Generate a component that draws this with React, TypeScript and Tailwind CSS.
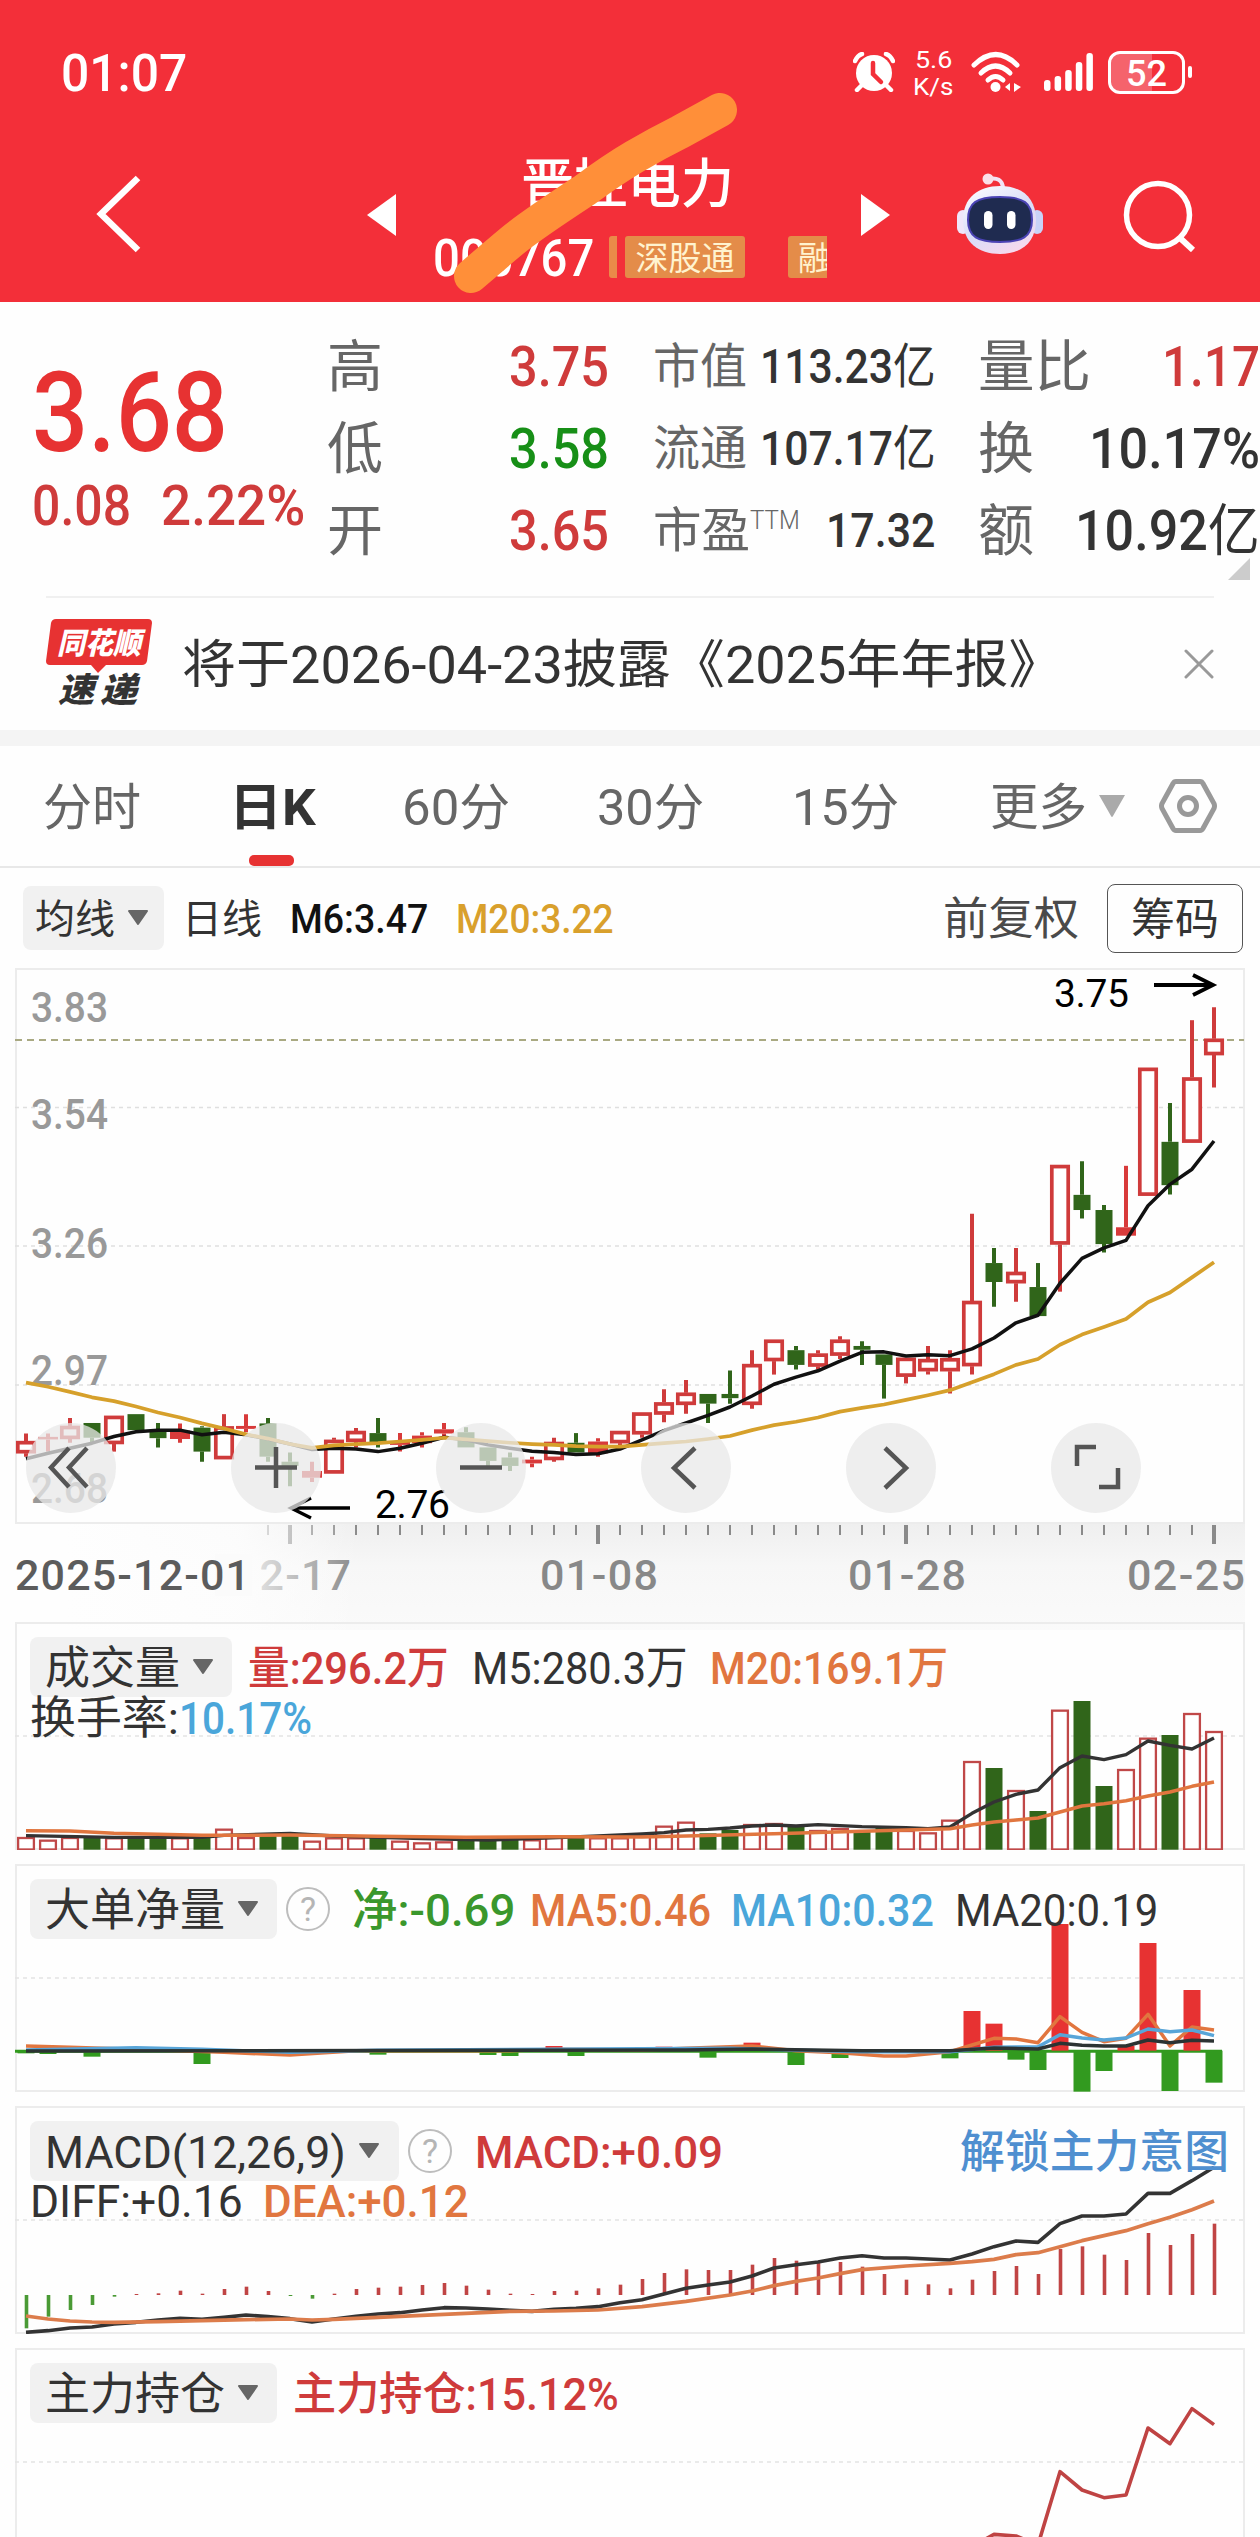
import React, {useLayoutEffect, useRef, useState} from "react";
import clsx from "clsx";

const RED = "#cf3b3b";
const GREEN = "#30651a";
const UP = "#e73232";
const DOWN = "#329a1f";
const FONT = "Roboto, 'Noto Sans CJK SC', sans-serif";

interface FitProps {
    className: string;
    children: React.ReactNode;
}

// one line of text, squeezed or stretched to the width of its box
const Fit: React.FC<FitProps> = ({className, children}) => {
    const outer = useRef<HTMLSpanElement>(null);
    const inner = useRef<HTMLSpanElement>(null);
    const [k, setK] = useState(1);
    useLayoutEffect(() => {
        if (outer.current && inner.current) {
            setK(outer.current.clientWidth / inner.current.offsetWidth);
        }
    }, []);
    return (
        <span ref={outer} className={clsx("block shrink-0 whitespace-nowrap pt-[3px] leading-none", className)}>
            <span ref={inner} className="inline-block origin-left" style={{transform: `scaleX(${k})`}}>{children}</span>
        </span>
    );
};

const Caret: React.FC<{ className?: string }> = ({className}) => (
    <svg className={clsx("shrink-0", className)} width="22" height="16" viewBox="0 0 22 16">
        <path d="M2 1h18L11 14z" fill="#666" stroke="#666" strokeWidth="2" strokeLinejoin="round"/>
    </svg>
);

const Help: React.FC = () => (
    <span className="ml-[9px] flex h-[44px] w-[44px] shrink-0 items-center justify-center rounded-full border-[2.5px] border-[#bdbdbd] text-[34px] leading-none text-[#b5b5b5]">?</span>
);

const StatusBar: React.FC = () => (
    <div className="flex h-[144px] items-center pl-[61px]">
        <Fit className="w-[126px] text-[51px] font-medium">01:07</Fit>
        <svg className="ml-[666px] shrink-0" width="42" height="40" viewBox="0 0 42 40">
            <circle cx="21" cy="21" r="18" fill="#fff"/>
            <path d="M2 9q3-6 7-7M40 9q-3-6-7-7M8 34l-4 4M34 34l4 4" stroke="#fff" strokeWidth="4.5" strokeLinecap="round" fill="none"/>
            <path d="M20 11v11l8 8" stroke="#f32f39" strokeWidth="4.5" strokeLinecap="round" fill="none"/>
        </svg>
        <div className="ml-[18px] flex w-[40px] flex-col items-center">
            <Fit className="w-[37px] text-[24px]">5.6</Fit>
            <Fit className="w-[40px] text-[24px]">K/s</Fit>
        </div>
        <svg className="ml-[18px] shrink-0" width="50" height="42" viewBox="0 0 50 42">
            <g fill="none" stroke="#fff" strokeWidth="5" strokeLinecap="round">
                <path d="M3 14q22-21 43 0"/>
                <path d="M10 22q14.500-14 29 0"/>
                <path d="M17 29q7.500-7 15 0"/>
            </g>
            <circle cx="24.500" cy="36" r="5" fill="#fff"/>
            <path d="M34 36l5-4v8zM50 36l-7-4v9z" fill="#fff"/>
        </svg>
        <svg className="ml-[23px] shrink-0" width="50" height="40" viewBox="0 0 50 40">
            {[28, 24, 18, 10, 1].map((y, i) => (
                <rect key={y} x={i * 10.6} y={y} width="6.500" height={39 - y} rx="3" fill="#fff"/>
            ))}
        </svg>
        <div className="ml-[14px] flex h-[43px] w-[77px] shrink-0 items-center justify-center rounded-[12px] border-[3px] border-white bg-[linear-gradient(90deg,#f5636c_58%,transparent_58%)]">
            <Fit className="w-[41px] text-[37px] font-medium">52</Fit>
        </div>
        <div className="ml-[3px] h-[12px] w-[4px] rounded-full bg-white"/>
    </div>
);

const Robot: React.FC = () => (
    <svg className="ml-[65px] shrink-0" width="88" height="84" viewBox="0 0 88 84">
        <defs>
            <linearGradient id="shell" x1="0" y1="0" x2="0.600" y2="1">
                <stop offset="0" stopColor="#fff"/>
                <stop offset="0.600" stopColor="#d9dcf8"/>
                <stop offset="1" stopColor="#f4d9ee"/>
            </linearGradient>
        </defs>
        <path d="M32 7q14-3 15 9" stroke="#f3e3f5" strokeWidth="4" fill="none"/>
        <circle cx="32" cy="7" r="5.500" fill="#fbdfe8"/>
        <rect x="1" y="38" width="12" height="24" rx="6" fill="#efe6fa"/>
        <rect x="75" y="38" width="12" height="24" rx="6" fill="#c9d2f7"/>
        <path d="M44 14c22 0 36 12 36 34S66 82 44 82 7 70 7 48s15-34 37-34z" fill="url(#shell)"/>
        <path d="M44 25c24 0 32 6 32 23S66 70 44 70 12 65 12 48s8-23 32-23z" fill="#1f2b50" stroke="#4a43b4" strokeWidth="2"/>
        <rect x="28" y="39" width="8.500" height="18" rx="4.200" fill="#fff"/>
        <rect x="51" y="39" width="8.500" height="18" rx="4.200" fill="#fff"/>
    </svg>
);

const Header: React.FC = () => (
    <header className="relative h-[302px] bg-[#f32f39] text-white">
        <StatusBar/>
        <div className="flex h-[140px] items-center pl-[95px]">
            <svg className="shrink-0" width="48" height="80" viewBox="0 0 48 80">
                <path d="M43 4L6 40l37 36" stroke="#fff" strokeWidth="6.500" fill="none"/>
            </svg>
            <svg className="ml-[224px] shrink-0" width="30" height="44" viewBox="0 0 30 44">
                <path d="M0 23L29 2v42z" fill="#fff"/>
            </svg>
            <div className="ml-[36px] flex h-full w-[394px] flex-col pt-[12px]">
                <Fit className="ml-[88px] h-[54px] w-[213px] text-[53px] font-medium">晋控电力</Fit>
                <div className="mt-[20px] flex h-[58px] items-center overflow-hidden">
                    <Fit className="w-[161px] text-[52px] font-medium">000767</Fit>
                    <div className="ml-[15px] h-[42px] w-[8px] shrink-0 rounded-l-[3px] bg-[#ea8a49]"/>
                    <div className="ml-[8px] flex h-[42px] w-[120px] shrink-0 items-center justify-center rounded-[3px] bg-[#e48c49] text-[#fff3cf]">
                        <Fit className="w-[99px] text-[33px]">深股通</Fit>
                    </div>
                    <div className="ml-[43px] flex h-[42px] w-[120px] shrink-0 items-center rounded-[3px] bg-[#e48c49] pl-[10px] text-[#fff3cf]">
                        <Fit className="w-[33px] text-[33px]">融</Fit>
                    </div>
                </div>
            </div>
            <svg className="ml-[34px] shrink-0" width="30" height="44" viewBox="0 0 30 44">
                <path d="M29 23L0 2v42z" fill="#fff"/>
            </svg>
            <Robot/>
            <svg className="ml-[78px] shrink-0" width="76" height="76" viewBox="0 0 76 76">
                <circle cx="36" cy="39" r="31.500" stroke="#fff" strokeWidth="5.500" fill="none"/>
                <path d="M58 62l13 12" stroke="#fff" strokeWidth="6"/>
            </svg>
        </div>
        {/* marker stroke over the stock name */}
        <svg className="absolute left-[440px] top-[80px]" width="310" height="220" viewBox="440 80 310 220">
            <path d="M471 276Q494 256 512 241T585 190Q612 170 634 157T680 132L720 110" stroke="#ff8f39" strokeWidth="34" strokeLinecap="round" strokeLinejoin="round" fill="none"/>
        </svg>
    </header>
);

const Quote: React.FC = () => (
    <section className="relative flex h-[294px] text-[56px] text-[#333]">
        <div className="w-[327px] pl-[32px] pt-[52px]">
            <Fit className="w-[196px] text-[112px] font-medium text-[#e73232]">3.68</Fit>
            <div className="mt-[6px] flex text-[#cf3b3b] font-medium">
                <Fit className="w-[99px]">0.08</Fit>
                <Fit className="ml-[30px] w-[144px]">2.22%</Fit>
            </div>
        </div>
        <div className="w-[282px] pt-[22px] text-[#666]">
            <div className="flex h-[82px] items-center justify-between">
                <Fit className="w-[56px]">高</Fit>
                <Fit className="w-[100px] font-medium text-[#cf3b3b]">3.75</Fit>
            </div>
            <div className="flex h-[82px] items-center justify-between">
                <Fit className="w-[56px]">低</Fit>
                <Fit className="w-[100px] font-medium text-[#178f17]">3.58</Fit>
            </div>
            <div className="flex h-[82px] items-center justify-between">
                <Fit className="w-[56px]">开</Fit>
                <Fit className="w-[100px] font-medium text-[#cf3b3b]">3.65</Fit>
            </div>
        </div>
        <div className="ml-[44px] w-[283px] pt-[22px] text-[48px]">
            <div className="flex h-[82px] items-center justify-between">
                <Fit className="w-[94px] text-[#666]">市值</Fit>
                <Fit className="w-[176px] font-medium">113.23<span className="font-normal">亿</span></Fit>
            </div>
            <div className="flex h-[82px] items-center justify-between">
                <Fit className="w-[94px] text-[#666]">流通</Fit>
                <Fit className="w-[176px] font-medium">107.17<span className="font-normal">亿</span></Fit>
            </div>
            <div className="flex h-[82px] items-center">
                <Fit className="w-[97px] text-[#666]">市盈</Fit>
                <Fit className="mb-[20px] w-[50px] text-[25px] font-light text-[#666]">TTM</Fit>
                <Fit className="ml-[26px] w-[109px] font-medium">17.32</Fit>
            </div>
        </div>
        <div className="ml-[42px] w-[282px] pt-[22px]">
            <div className="flex h-[82px] items-center justify-between">
                <Fit className="w-[113px] text-[#666]">量比</Fit>
                <Fit className="w-[98px] font-medium text-[#cf3b3b]">1.17</Fit>
            </div>
            <div className="flex h-[82px] items-center justify-between">
                <Fit className="w-[56px] text-[#666]">换</Fit>
                <Fit className="w-[171px] font-medium">10.17%</Fit>
            </div>
            <div className="flex h-[82px] items-center justify-between">
                <Fit className="w-[56px] text-[#666]">额</Fit>
                <Fit className="w-[185px] font-medium">10.92<span className="font-normal">亿</span></Fit>
            </div>
        </div>
        <svg className="absolute left-[1228px] top-[256px]" width="22" height="22" viewBox="0 0 22 22">
            <path d="M22 0v22H0z" fill="#ccc"/>
        </svg>
    </section>
);

const News: React.FC = () => (
    <section className="mx-[46px] flex h-[134px] items-center border-t-2 border-[#f0f0f0]">
        <svg className="-mt-[3px] shrink-0 overflow-visible" width="108" height="94" viewBox="0 0 108 94" fontFamily={FONT} fontStyle="italic">
            <path d="M10 3h92q4 0 4 4l-5 38q-1 4-5 4H60l-8 8-7-8H4q-4 0-4-4L5 7q1-4 5-4z" fill="#e73232"/>
            <text x="11" y="38" fontSize="30" fontWeight="900" fill="#fff" textLength="84" lengthAdjust="spacingAndGlyphs">同花顺</text>
            <text x="12" y="86" fontSize="34" fontWeight="900" fill="#333" textLength="36" lengthAdjust="spacingAndGlyphs">速</text>
            <text x="54" y="86" fontSize="34" fontWeight="900" fill="#333" textLength="37" lengthAdjust="spacingAndGlyphs">递</text>
        </svg>
        <Fit className="ml-[28px] w-[880px] text-[52px] text-[#333]">将于2026-04-23披露《2025年年报》</Fit>
        <svg className="ml-[122px] shrink-0" width="30" height="30" viewBox="0 0 30 30">
            <path d="M2 2l26 26M28 2L2 28" stroke="#999" strokeWidth="3" strokeLinecap="round"/>
        </svg>
    </section>
);

const Tabs: React.FC = () => (
    <nav className="relative flex h-[122px] items-center border-b-2 border-[#e8e8e8] pl-[43px] text-[50px] text-[#666]">
        <Fit className="w-[98px]">分时</Fit>
        <Fit className="ml-[88px] w-[87px] font-bold text-[#333]">日K</Fit>
        <Fit className="ml-[86px] w-[108px]">60分</Fit>
        <Fit className="ml-[87px] w-[107px]">30分</Fit>
        <Fit className="ml-[88px] w-[107px]">15分</Fit>
        <Fit className="ml-[91px] w-[97px]">更多</Fit>
        <svg className="ml-[11px] shrink-0" width="28" height="24" viewBox="0 0 28 24">
            <path d="M1 1h26L15 22q-1 2-2 0z" fill="#aaa"/>
        </svg>
        <svg className="ml-[33px] shrink-0" width="58" height="56" viewBox="0 0 58 56">
            <path d="M17 3.500h24q2 0 3 2l11 20q1 2.500 0 5l-11 20q-1 2-3 2H17q-2 0-3-2L3 30.500q-1-2.500 0-5l11-20q1-2 3-2z" stroke="#999" strokeWidth="5" fill="none"/>
            <circle cx="29" cy="28" r="8.500" stroke="#999" strokeWidth="5" fill="none"/>
        </svg>
        <div className="absolute bottom-0 left-[249px] h-[11px] w-[45px] rounded-[5px] bg-[#e73232]"/>
    </nav>
);

const AverageRow: React.FC = () => (
    <div className="flex h-[100px] items-center pl-[23px] text-[41px] text-[#333]">
        <div className="flex h-[64px] w-[141px] items-center rounded-[8px] bg-[#f1f1f1] pl-[12px]">
            <Fit className="w-[80px] text-[40px]">均线</Fit>
            <Caret className="ml-[12px]"/>
        </div>
        <Fit className="ml-[18px] w-[80px] text-[40px]">日线</Fit>
        <Fit className="ml-[28px] w-[138px] font-medium text-[#111]">M6:3.47</Fit>
        <Fit className="ml-[28px] w-[158px] font-medium text-[#d9a02c]">M20:3.22</Fit>
        <Fit className="ml-[329px] w-[136px] text-[45px] text-[#4a4a4a]">前复权</Fit>
        <div className="ml-[28px] flex h-[69px] w-[136px] shrink-0 items-center justify-center rounded-[8px] border border-[#555]">
            <Fit className="w-[88px] text-[44px]">筹码</Fit>
        </div>
    </div>
);

const cx = (i: number) => 11 + i * 22;

type Point = [number, number];

const line = (points: Point[], y: (v: number) => number) => points.map(([i, v]) => `${cx(i)},${y(v)}`).join(" ");

const series = (values: number[]): Point[] => values.map((v, i) => [i, v]);

// kind, high, body top, body bottom, low ("r" is a flat red body)
const candles: [string, number, number, number, number][] = [
    ["R", 1125, 1143, 1172, 1180], ["r", 1125, 1133, 1139, 1168], ["R", 1088, 1107, 1138, 1147], ["G", 1100, 1100, 1135, 1147],
    ["R", 1083, 1083, 1150, 1168], ["G", 1079, 1079, 1117, 1117], ["G", 1100, 1118, 1136, 1158], ["r", 1101, 1118, 1138, 1147],
    ["G", 1108, 1111, 1168, 1192], ["R", 1079, 1108, 1186, 1186], ["r", 1079, 1107, 1114, 1122], ["G", 1088, 1101, 1180, 1192],
    ["G", 1170, 1192, 1202, 1250], ["r", 1192, 1214, 1230, 1240], ["R", 1135, 1140, 1220, 1220], ["R", 1112, 1119, 1145, 1158],
    ["G", 1088, 1124, 1147, 1158], ["r", 1124, 1144, 1152, 1168], ["r", 1122, 1130, 1148, 1158], ["r", 1100, 1115, 1125, 1136],
    ["G", 1110, 1122, 1158, 1158], ["G", 1158, 1158, 1190, 1202], ["G", 1170, 1182, 1202, 1214], ["r", 1180, 1187, 1196, 1205],
    ["R", 1135, 1145, 1188, 1192], ["G", 1124, 1147, 1170, 1170], ["r", 1136, 1144, 1172, 1180], ["R", 1119, 1119, 1148, 1158],
    ["R", 1075, 1075, 1127, 1135], ["R", 1020, 1051, 1080, 1098], ["R", 998, 1028, 1057, 1078], ["G", 1031, 1031, 1054, 1100],
    ["G", 975, 1031, 1041, 1054], ["R", 927, 960, 1057, 1066], ["R", 902, 902, 953, 985], ["G", 917, 927, 962, 973],
    ["R", 927, 935, 966, 973], ["R", 894, 902, 940, 948], ["G", 906, 917, 926, 962], ["G", 937, 937, 962, 1042],
    ["R", 945, 945, 990, 1006], ["R", 917, 948, 977, 985], ["R", 927, 946, 977, 1030], ["R", 603, 810, 965, 985],
    ["G", 684, 720, 765, 824], ["R", 684, 741, 768, 812], ["G", 720, 777, 846, 846], ["R", 487, 487, 676, 788],
    ["G", 478, 558, 594, 614], ["G", 582, 594, 675, 695], ["r", 489, 635, 655, 655], ["R", 256, 256, 560, 560],
    ["G", 340, 432, 535, 557], ["R", 143, 279, 434, 434], ["R", 112, 187, 226, 303],
];

const ma6 = [1185, 1172, 1160, 1148, 1132, 1121, 1117, 1117, 1128, 1122, 1128, 1138, 1150, 1163, 1160, 1162, 1168, 1160, 1148, 1134,
    1140, 1152, 1160, 1167, 1170, 1175, 1173, 1162, 1140, 1118, 1100, 1082, 1062, 1036, 1008, 991, 976, 953, 932, 931,
    941, 938, 940, 924, 898, 862, 844, 768, 709, 684, 666, 584, 533, 497, 430];

const ma20 = [1004, 1014, 1026, 1039, 1048, 1061, 1075, 1087, 1101, 1113, 1127, 1137, 1150, 1159, 1153, 1150, 1148, 1144, 1140, 1135,
    1139, 1143, 1147, 1150, 1152, 1155, 1156, 1156, 1152, 1148, 1144, 1138, 1131, 1117, 1105, 1097, 1087, 1073, 1064, 1056,
    1045, 1034, 1022, 1003, 984, 962, 948, 914, 890, 872, 853, 813, 790, 754, 718];

const labels: [string, number][] = [["3.83", 54], ["3.54", 161], ["3.26", 290], ["2.97", 417], ["2.68", 535]];

const buttons = [
    "M43 25L25 44.500l18 19.500M61 25L43 44.500l18 19.500",
    "M24 44.500h42M45 24v41",
    "M24 44.500h42",
    "M54 25L33 45l21 20",
    "M39 25l21 20-21 20",
    "M26 43V24h19M67 45v19H48",
];

const PriceChart: React.FC = () => {
    const y = (v: number) => v * 0.4209 - 8;
    return (
        <section className="relative mx-[15px] h-[556px]">
            <svg className="block" width="1230" height="556" viewBox="0 0 1230 556" fontFamily={FONT}>
                <rect x="1" y="1" width="1228" height="554" fill="none" stroke="#ececec" strokeWidth="2"/>
                {[139.5, 278, 417].map(g => (
                    <path key={g} d={`M0 ${g}h1229`} stroke="#dfdfdf" strokeWidth="1.500" strokeDasharray="4 4"/>
                ))}
                <path d="M0 72h1229" stroke="#a9a982" strokeWidth="1.800" strokeDasharray="7 5"/>
                {labels.map(([t, b]) => (
                    <text key={t} x="16" y={b} fontSize="43" fontWeight="500" fill="#999" textLength="77" lengthAdjust="spacingAndGlyphs">{t}</text>
                ))}
                {candles.map(([kind, high, top, bottom, low], i) => {
                    const color = kind === "G" ? GREEN : kind === "r" ? "#d83a3a" : RED;
                    return (
                        <g key={i}>
                            <path d={`M${cx(i)} ${y(high)}V${y(top)}M${cx(i)} ${y(bottom)}V${y(low)}`} stroke={color} strokeWidth="4"/>
                            {kind === "R"
                                ? <rect x={cx(i) - 8.2} y={y(top) + 1.6} width="16.400" height={y(bottom) - y(top) - 3.2} fill="#fff" stroke={color} strokeWidth="3.700"/>
                                : <rect x={cx(i) - (kind === "G" ? 8.5 : 10)} y={y(top)} width={kind === "G" ? 17 : 20} height={y(bottom) - y(top)} fill={color}/>}
                        </g>
                    );
                })}
                <polyline points={line(series(ma6), y)} fill="none" stroke="#111" strokeWidth="3.500" strokeLinejoin="round"/>
                <polyline points={line(series(ma20), y)} fill="none" stroke="#d6a02b" strokeWidth="3.700" strokeLinejoin="round"/>
                <text x="1039" y="39" fontSize="39" fill="#000" textLength="75" lengthAdjust="spacing">3.75</text>
                <path d="M1139 17h58M1178 7l20 10-20 10" stroke="#000" strokeWidth="3.800" fill="none"/>
                <text x="360" y="550" fontSize="39" fill="#000" textLength="75" lengthAdjust="spacing">2.76</text>
                <path d="M335 540h-58M296 530l-20 10 20 10" stroke="#000" strokeWidth="3.400" fill="none"/>
            </svg>
            <div className="absolute left-[11px] top-[455px] flex gap-[115px]">
                {buttons.map(d => (
                    <div key={d} className="h-[90px] w-[90px] rounded-full bg-[#e8e8e8]/75">
                        <svg width="90" height="90" viewBox="0 0 90 90">
                            <path d={d} stroke="#555" strokeWidth="4.500" fill="none"/>
                        </svg>
                    </div>
                ))}
            </div>
        </section>
    );
};

const DateAxis: React.FC = () => (
    <div className="mx-[15px] h-[98px]">
        <svg className="block overflow-visible" width="1230" height="98" viewBox="0 0 1230 98" fontFamily={FONT} fontSize="43" fontWeight="500">
            <defs>
                <linearGradient id="axisBg" x1="0" y1="0" x2="0" y2="1">
                    <stop offset="0" stopColor="#efefef"/>
                    <stop offset="0.400" stopColor="#f7f7f7"/>
                    <stop offset="1" stopColor="#fafafa"/>
                </linearGradient>
                <linearGradient id="fade" x1="0" y1="0" x2="1230" y2="0" gradientUnits="userSpaceOnUse">
                    <stop offset="0.040" stopColor="#fefefe"/>
                    <stop offset="0.180" stopColor="#fdfdfd" stopOpacity="0.900"/>
                    <stop offset="0.280" stopColor="#fefefe" stopOpacity="0"/>
                </linearGradient>
            </defs>
            <rect width="1230" height="106" fill="url(#axisBg)"/>
            {Array.from({length: 44}, (_, n) => n + 11).map(i => {
                const major = (i - 12) % 14 === 0;
                return <path key={i} d={`M${cx(i)} 1V${major ? 20 : 11}`} stroke="#8a8a8a" strokeWidth={major ? 4 : 2}/>;
            })}
            <text x="219" y="66" fill="#888" textLength="117" lengthAdjust="spacing">12-17</text>
            <rect width="420" height="106" fill="url(#fade)"/>
            <rect x="200" y="30" width="37" height="42" fill="#fbfbfb"/>
            <text x="0" y="66" fill="#5c5c5c" textLength="235" lengthAdjust="spacing">2025-12-01</text>
            <text x="525" y="66" fill="#888" textLength="118" lengthAdjust="spacing">01-08</text>
            <text x="833" y="66" fill="#888" textLength="118" lengthAdjust="spacing">01-28</text>
            <text x="1112" y="66" fill="#888" textLength="118" lengthAdjust="spacing">02-25</text>
        </svg>
    </div>
);

interface PanelProps {
    grid: number;
    chart: React.ReactNode;
    className: string;
    children: React.ReactNode;
}

const Panel: React.FC<PanelProps> = ({grid, chart, className, children}) => (
    <section className={clsx("relative mx-[15px] h-[228px] text-[45px]", className)}>
        <svg className="absolute inset-0" width="1230" height="228" viewBox="0 0 1230 228">
            <rect x="1" y="1" width="1228" height={className === "" ? 300 : 226} fill="none" stroke="#ececec" strokeWidth="2"/>
            <path d={`M0 ${grid}h1229`} stroke="#e4e4e4" strokeWidth="1.500" strokeDasharray="4 4"/>
            {chart}
        </svg>
        <div className="relative pl-[15px] pt-[15px]">{children}</div>
    </section>
);

const Chip: React.FC<{ className: string, text: string, width: string }> = ({className, text, width}) => (
    <div className={clsx("flex h-[60px] shrink-0 items-center rounded-[8px] bg-[#f1f1f1] pl-[15px] text-[#333]", className)}>
        <Fit className={width}>{text}</Fit>
        <Caret className="ml-[12px]"/>
    </div>
);

const volumes = [711, 719, 711, -711, 712, -712, -712, 712, -712, 686, 711, -708, -708, 722, 712, 712, -708, 722, 727, 724,
    -718, -718, -718, 718, 706, -712, 712, 712, 700, 677, 665, -700, -690, 672, 669, -680, 690, 684, -690, -684,
    690, 697, 659, 483, -504, 570, -633, 329, -303, -558, 507, 413, -405, 339, 393];

const volumeM5: Point[] = [[0, 707], [4, 712], [8, 712], [9, 706], [12, 700], [14, 708], [18, 716], [21, 720], [23, 716], [26, 708], [28, 702],
    [29, 698], [30, 690], [31, 688], [32, 684], [33, 678], [34, 675], [35, 678], [36, 674], [37, 677], [38, 680], [40, 683], [41, 686],
    [42, 681], [43, 640], [44, 606], [45, 583], [46, 570], [47, 503], [48, 468], [49, 479], [50, 464], [51, 423], [52, 436], [53, 447], [54, 414]];

const volumeM20: Point[] = [[0, 692], [2, 693], [4, 700], [8, 706], [12, 705], [16, 709], [20, 712], [24, 710], [28, 711], [30, 708], [34, 701],
    [38, 694], [42, 686], [43, 675], [44, 666], [45, 660], [46, 654], [47, 636], [48, 618], [49, 611], [50, 602], [51, 588], [52, 576], [53, 559], [54, 546]];

const VolumePanel: React.FC = () => {
    const y = (v: number) => v / 3 - 22;
    const chart = (
        <>
            {volumes.map((v, i) => v > 0
                ? <rect key={i} x={cx(i) - 7.9} y={y(v) + 1} width="15.800" height={226.500 - y(v)} fill="#fff" stroke="#c04848" strokeWidth="2.300"/>
                : <rect key={i} x={cx(i) - 8.5} y={y(-v)} width="17" height={227.700 - y(-v)} fill={GREEN}/>)}
            <polyline points={line(volumeM5, y)} fill="none" stroke="#333" strokeWidth="3.400" strokeLinejoin="round"/>
            <polyline points={line(volumeM20, y)} fill="none" stroke="#e1763f" strokeWidth="3.500" strokeLinejoin="round"/>
        </>
    );
    return (
        <Panel grid={114} chart={chart} className="mb-[14px]">
            <div className="flex h-[60px] items-center">
                <Chip className="w-[202px]" width="w-[135px]" text="成交量"/>
                <Fit className="ml-[16px] w-[201px] font-medium text-[#cf3b3b]">量:296.2万</Fit>
                <Fit className="ml-[23px] w-[216px] text-[#333]">M5:280.3万</Fit>
                <Fit className="ml-[22px] w-[238px] font-medium text-[#e1763f]">M20:169.1万</Fit>
            </div>
            <div className="flex h-[40px] items-center text-[#333]">
                <Fit className="w-[149px]">换手率:</Fit>
                <Fit className="w-[133px] font-medium text-[#4aa6da]">10.17%</Fit>
            </div>
        </Panel>
    );
};

const orders: Point[] = [[0, 1360], [1, 1362], [3, 1370], [8, 1392], [16, 1364], [21, 1365], [22, 1368], [24, 1338], [25, 1368], [29, 1340],
    [31, 1373], [33, 1328], [35, 1395], [37, 1374], [42, 1375], [43, 1233], [44, 1271], [45, 1379], [46, 1410], [47, 972], [48, 1475],
    [49, 1413], [50, 1338], [51, 1029], [52, 1473], [53, 1170], [54, 1448]];

const orderLines: [string, Point[]][] = [
    ["#e1763f", [[0, 1338], [2, 1342], [6, 1350], [9, 1357], [12, 1365], [15, 1352], [22, 1352], [24, 1348], [28, 1350], [30, 1345], [33, 1338],
        [35, 1352], [37, 1358], [39, 1368], [40, 1368], [42, 1355], [43, 1335], [44, 1315], [45, 1317], [46, 1328], [47, 1250], [48, 1297],
        [49, 1325], [50, 1315], [51, 1243], [52, 1338], [53, 1281], [54, 1290]]],
    ["#58a5d8", [[0, 1350], [5, 1343], [8, 1348], [12, 1357], [16, 1351], [32, 1345], [38, 1355], [42, 1355], [44, 1342], [46, 1340], [47, 1304],
        [48, 1314], [49, 1320], [50, 1314], [51, 1287], [52, 1295], [53, 1290], [54, 1307]]],
    ["#2c3333", [[0, 1353], [30, 1350], [33, 1347], [38, 1352], [42, 1352], [44, 1344], [46, 1347], [47, 1330], [48, 1336], [49, 1338], [50, 1338],
        [51, 1320], [52, 1328], [53, 1321], [54, 1323]]],
];

const OrderPanel: React.FC = () => {
    const y = (v: number) => v / 3 - 264;
    const zero = y(1352);
    const chart = (
        <>
            <path d={`M0 ${zero + 0.5}H${cx(54) + 8}`} stroke={DOWN} strokeWidth="3"/>
            {orders.map(([i, v]) => (
                <rect key={i} x={cx(i) - 8.5} y={Math.min(zero, y(v))} width="17" height={Math.abs(y(v) - zero)} fill={v < 1352 ? UP : DOWN}/>
            ))}
            {orderLines.map(([color, points]) => (
                <polyline key={color} points={line(points, y)} fill="none" stroke={color} strokeWidth="3.500" strokeLinejoin="round"/>
            ))}
        </>
    );
    return (
        <Panel grid={114} chart={chart} className="mb-[14px]">
            <div className="flex h-[60px] items-center">
                <Chip className="w-[247px]" width="w-[180px]" text="大单净量"/>
                <Help/>
                <Fit className="ml-[22px] w-[163px] font-medium text-[#3a972c]">净:-0.69</Fit>
                <Fit className="ml-[15px] w-[181px] font-medium text-[#e1763f]">MA5:0.46</Fit>
                <Fit className="ml-[20px] w-[203px] font-medium text-[#4aa6da]">MA10:0.32</Fit>
                <Fit className="ml-[21px] w-[203px] text-[#333]">MA20:0.19</Fit>
            </div>
        </Panel>
    );
};

const macd = [745, 710, 690, 675, 650, 642, 640, 632, 641, 627, 620, 633, 648, 656, 641, 627, 623, 620, 615, 609,
    617, 629, 641, 642, 633, 632, 625, 614, 597, 579, 568, 570, 570, 554, 534, 542, 548, 546, 560, 582,
    599, 613, 625, 599, 573, 558, 582, 507, 499, 524, 540, 459, 495, 462, 431];

const diff = [757, 752, 744, 741, 732, 727, 720, 715, 718, 712, 705, 710, 716, 726, 717, 709, 702, 698, 690, 683,
    684, 687, 691, 694, 688, 685, 680, 668, 659, 642, 625, 615, 606, 588, 564, 554, 546, 534, 527, 534,
    534, 537, 540, 522, 500, 483, 487, 431, 408, 408, 402, 340, 340, 302, 262];

const dea: Point[] = [[0, 708], [1, 717], [2, 723], [3, 726], [4, 727], [6, 725], [8, 722], [10, 719], [12, 717], [13, 720], [14, 718], [16, 712],
    [18, 706], [20, 700], [22, 694], [24, 693], [26, 690], [28, 680], [30, 664], [32, 645], [33, 633], [34, 617], [35, 604], [36, 594],
    [37, 581], [38, 569], [40, 558], [42, 550], [43, 545], [44, 538], [45, 524], [46, 518], [47, 500], [48, 482], [49, 467], [50, 452],
    [51, 431], [52, 412], [53, 389], [54, 363]];

const MacdPanel: React.FC = () => {
    const y = (v: number) => v / 3 - 26;
    const chart = (
        <>
            {macd.map((v, i) => (
                <path key={i} d={`M${cx(i) + 0.5} ${y(645)}V${y(v)}`} stroke={v > 645 ? "#4a9a35" : "#c04444"} strokeWidth="3.600"/>
            ))}
            <polyline points={line(series(diff), y)} fill="none" stroke="#333" strokeWidth="3.600" strokeLinejoin="round"/>
            <polyline points={line(dea, y)} fill="none" stroke="#dc7c4b" strokeWidth="3.700" strokeLinejoin="round"/>
        </>
    );
    return (
        <Panel grid={114} chart={chart} className="mb-[14px]">
            <div className="flex h-[60px] items-center">
                <Chip className="w-[369px]" width="w-[301px]" text="MACD(12,26,9)"/>
                <Help/>
                <Fit className="ml-[23px] w-[248px] font-medium text-[#cf3b3b]">MACD:+0.09</Fit>
                <Fit className="ml-[237px] w-[269px] font-medium text-[#4f8fd0]">解锁主力意图</Fit>
            </div>
            <div className="flex h-[38px] items-center">
                <Fit className="w-[213px] text-[#333]">DIFF:+0.16</Fit>
                <Fit className="ml-[20px] w-[206px] font-medium text-[#e1763f]">DEA:+0.12</Fit>
            </div>
        </Panel>
    );
};

const holding: Point[] = [[43, 1400], [44, 1363], [45, 1368], [46, 1395], [47, 1175], [48, 1230], [49, 1253], [50, 1245], [51, 1044], [52, 1091], [53, 986], [54, 1034]];

const HoldingPanel: React.FC = () => (
    <Panel
        grid={114}
        chart={<polyline points={line(holding, v => v / 3 - 268)} fill="none" stroke="#bf4343" strokeWidth="3.600" strokeLinejoin="round"/>}
        className=""
    >
        <div className="flex h-[60px] items-center">
            <Chip className="w-[247px]" width="w-[180px]" text="主力持仓"/>
            <Fit className="ml-[16px] w-[326px] font-medium text-[#cf3b3b]">主力持仓:15.12%</Fit>
        </div>
    </Panel>
);

const App: React.FC = () => {
    return (
        <main className="h-[2537px] w-[1260px] overflow-hidden bg-[#fefefe] font-[Roboto,'Noto_Sans_CJK_SC',sans-serif]">
            <Header/>
            <Quote/>
            <News/>
            <div className="h-[16px] bg-[#f4f4f4]"/>
            <Tabs/>
            <AverageRow/>
            <PriceChart/>
            <DateAxis/>
            <VolumePanel/>
            <OrderPanel/>
            <MacdPanel/>
            <HoldingPanel/>
        </main>
    );
}
export default App;
